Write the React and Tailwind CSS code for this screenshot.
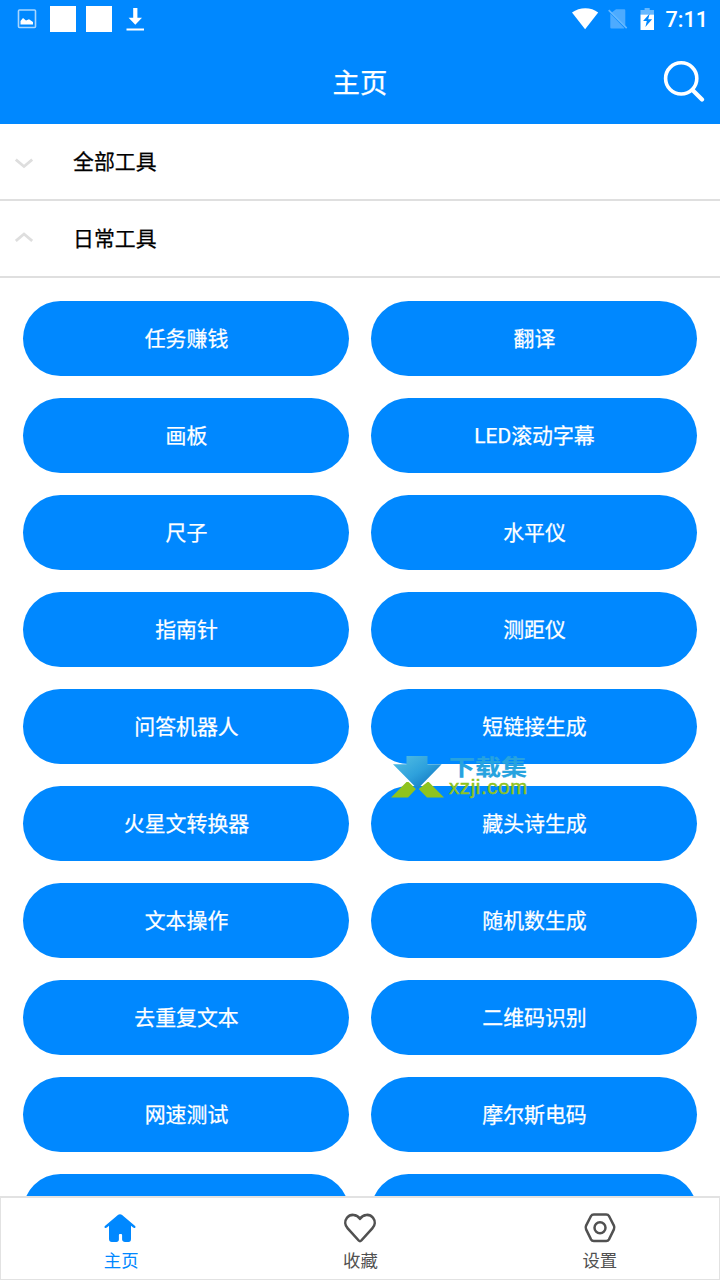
const tools = [
  '任务赚钱', '翻译',
  '画板', 'LED滚动字幕',
  '尺子', '水平仪',
  '指南针', '测距仪',
  '问答机器人', '短链接生成',
  '火星文转换器', '藏头诗生成',
  '文本操作', '随机数生成',
  '去重复文本', '二维码识别',
  '网速测试', '摩尔斯电码',
  '', '',
]

export default function App() {
  return (
    <div className="relative flex h-[1280px] w-[720px] flex-col overflow-hidden bg-white font-['Roboto','Noto_Sans_CJK_SC',sans-serif] [-webkit-text-stroke:.25px]">
      <header className="shrink-0 bg-[#0088ff] text-white">
        <StatusBar />
        <div className="grid h-[86px] grid-cols-[1fr_auto_1fr] items-center">
          <h1 className="col-start-2 pt-[7px] text-[27.4px] leading-none">主页</h1>
          <button className="mr-[15px] justify-self-end" aria-label="搜索">
            <svg className="block" width="42" height="42" viewBox="0 0 42 42" fill="none" stroke="currentColor">
              <circle cx="18.2" cy="18.4" r="15.6" strokeWidth="3.6" />
              <path d="M29.5 30 39 39.5" strokeWidth="4.2" strokeLinecap="round" />
            </svg>
          </button>
        </div>
      </header>

      <main className="min-h-0 flex-1 overflow-hidden">
        <Section title="全部工具" />
        <Section title="日常工具" open />
        <div className="grid grid-cols-2 gap-[22px] px-[23px] pt-[23px]">
          {tools.map((name, i) => (
            <button key={i} className="h-[75px] rounded-full bg-[#0088ff] pt-0.5 pl-px text-[20.9px] leading-none text-white">
              {name}
            </button>
          ))}
        </div>
      </main>

      <nav className="grid h-[84px] shrink-0 grid-cols-3 border border-t-2 border-[#e2e2e2] bg-white">
        <Tab label="主页" active>
          <path d="M15 1.2c.8 0 1.5.3 2.1.8l13 10.9c.9.8.3 2.1-.7 2.1-.5 0-.9-.2-1.3-.5L26 12.8V26c0 1.9-.8 2.9-2.5 2.9h-3.5c-1.5 0-2.9-.8-2.9-2.4v-4.3c0-.8-.5-1.2-1.2-1.2h-.8c-.7 0-1.2.4-1.2 1.2v4.3c0 1.6-1 2.4-2.5 2.4H6.8C5.1 28.9 4 27.9 4 26V12.8l-2.1 1.7c-.4.3-.8.5-1.3.5-1 0-1.6-1.3-.7-2.1L12.9 2c.6-.5 1.3-.8 2.1-.8Z" fill="currentColor" />
        </Tab>
        <Tab label="收藏">
          <path d="M16 5.8C12.8.8 6.2.8 3 4.8.5 8 .8 12.4 3.7 15.4L14.7 27.5c.8.9 1.8.9 2.6 0l11-12.1c2.9-3 3.2-7.4.7-10.6-3.2-4-9.8-4-13 1Z" fill="none" stroke="currentColor" strokeWidth="2.6" strokeLinejoin="round" />
        </Tab>
        <Tab label="设置">
          <path d="M10.8 1.4h12.4c1.3 0 2.2.5 2.8 1.6l4.9 9.6c.6 1.3.6 2.5 0 3.8L26 26.3c-.6 1.1-1.5 1.6-2.8 1.6H10.8c-1.3 0-2.2-.5-2.8-1.6l-4.9-9.9c-.6-1.3-.6-2.5 0-3.8L8 3c.6-1.1 1.5-1.6 2.8-1.6Z" fill="none" stroke="currentColor" strokeWidth="2.5" />
          <circle cx="17" cy="14.8" r="5.5" fill="none" stroke="currentColor" strokeWidth="2.5" />
        </Tab>
      </nav>

      <Watermark />
    </div>
  )
}

function StatusBar() {
  return (
    <div className="flex h-[38px] items-center justify-between pl-[17px] pr-3">
      <div className="flex items-center">
        <svg className="mr-[13px]" width="20" height="20" viewBox="0 0 20 20">
          <rect x="1.5" y="1" width="17" height="17.5" rx="1" fill="none" stroke="#a8d6ff" strokeWidth="1.6" />
          <path d="M3.5 15.5V12l2.5-3 3 2.6 3-1.4 4 2.8v2.5Z" fill="#fff" />
        </svg>
        <div className="mr-2.5 size-[26px] bg-white" />
        <div className="mr-3.5 size-[26px] bg-white" />
        <svg width="19" height="26" viewBox="0 0 19 26" fill="#fff">
          <path d="M7.2 2h4.2v9.8H16l-6.7 7-6.7-7h4.6ZM.5 22.5H18v2H.5Z" />
        </svg>
      </div>
      <div className="flex items-center">
        <svg className="mr-[9px]" width="27" height="22" viewBox="0 0 27 22" fill="#fff">
          <path d="M0 4.6C7.6-1.1 19.2-1.1 26.2 4.6L13.1 21.2Z" />
        </svg>
        <svg className="mr-3" width="20" height="22" viewBox="0 0 20 22">
          <path d="M8 1.2h8.2q1.1 0 1.1 1.1v15.6L3.7 4.6ZM2.3 5.5l14 14.4q-.2.7-1 .7H3.4q-1.1 0-1.1-1.1Z" fill="#4dabff" />
          <path d="m.7 2.1 18 18" stroke="#66b8ff" strokeWidth="1.6" />
        </svg>
        <svg className="mr-2.5" width="15" height="23" viewBox="0 0 15 23">
          <path d="M4.6 0h5.1v2.1H14V6.5H.5V2.1h4.1Z" fill="#66b8ff" />
          <path d="M.5 6.5H14V22H.5Z" fill="#fff" />
          <path d="M9.7 5.4 3.1 13h3.7l-1.4 6 6.7-7.7H8.2Z" fill="#0088ff" />
        </svg>
        <span className="pt-0.5 text-[21.6px] font-medium leading-none [-webkit-text-stroke:0]">7:11</span>
      </div>
    </div>
  )
}

function Section({ title, open }) {
  return (
    <div className="flex h-[77px] items-center border-b-2 border-[#dfdfdf] pl-[15px]">
      <svg className="mr-10" width="18" height="14" viewBox="0 0 18 14" fill="none" stroke="#dedede" strokeWidth="2.8">
        <path d={open ? 'M.8 9 9 2l8.2 7' : 'M.8 4.5 9 11.5l8.2-7'} />
      </svg>
      <span className="pt-0.5 text-[20.9px] leading-none text-black">{title}</span>
    </div>
  )
}

function Tab({ label, active, children }) {
  return (
    <button className={`flex flex-col items-center pt-[15px] ${active ? 'text-[#0088ff]' : 'text-[#515151]'}`}>
      <svg className="overflow-visible" width="32" height="30" viewBox="0 0 32 30">{children}</svg>
      <span className="mt-2.5 pl-px text-[17.4px] leading-none [-webkit-text-stroke:0]">{label}</span>
    </button>
  )
}

function Watermark() {
  return (
    <div className="pointer-events-none absolute left-[391px] top-[755px] flex">
      <svg width="53" height="43" viewBox="0 0 53 43">
        <defs>
          <linearGradient id="arrow" x1="0" y1="0" x2="1" y2="1">
            <stop offset="0" stopColor="#55c0e4" />
            <stop offset=".5" stopColor="#2ea1dc" />
            <stop offset="1" stopColor="#0868b8" />
          </linearGradient>
        </defs>
        <path d="M15.5 1h21v8.3h14.2L26.5 34 2 9.3h13.5Z" fill="url(#arrow)" />
        <path d="M15.5 27h2L25 34l-8 8.5H0ZM36.5 27h1.3L53 42.5H36L27.7 34Z" fill="#8fc31f" />
      </svg>
      <div className="ml-[5px] pt-0.5">
        <div className="h-[20px] origin-top-left scale-y-[.84] text-[26px] font-bold leading-[26px] text-[#27a3df]">下载集</div>
        <div className="font-['Liberation_Sans',sans-serif] text-[20.5px] leading-[20px] tracking-[.6px] text-[#8fc31f] [-webkit-text-stroke:.5px]">xzji.com</div>
      </div>
    </div>
  )
}
